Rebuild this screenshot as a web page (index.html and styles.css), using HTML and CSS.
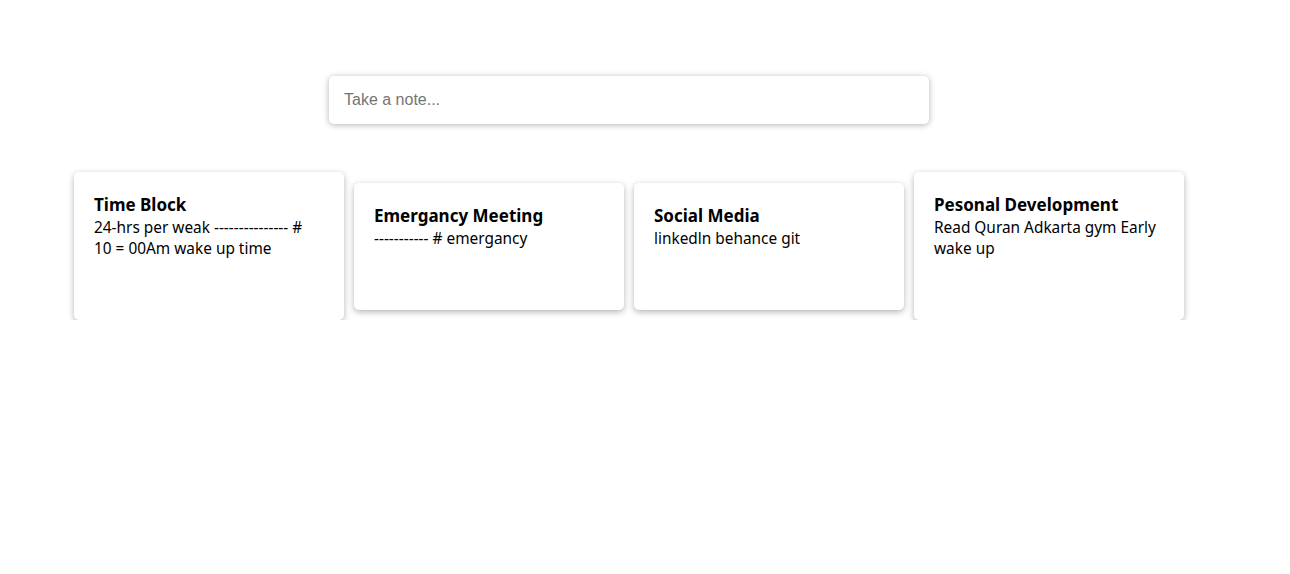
FILE: index.html
```html
<!DOCTYPE html>
<html>
<head>
<meta charset="utf-8">
<link rel="stylesheet" href="styles.css">
</head>
<body>
<div class="app">
  <form class="create">
    <input class="create-input" type="text" placeholder="Take a note...">
  </form>
  <div class="notes">
    <div class="note">
      <h1 class="note-title">Time Block</h1>
      <p class="note-body">24-hrs per weak --------------- # 10 = 00Am wake up time</p>
    </div>
    <div class="note">
      <h1 class="note-title">Emergancy Meeting</h1>
      <p class="note-body">----------- # emergancy</p>
    </div>
    <div class="note">
      <h1 class="note-title">Social Media</h1>
      <p class="note-body">linkedln behance git</p>
    </div>
    <div class="note">
      <h1 class="note-title">Pesonal Development</h1>
      <p class="note-body">Read Quran Adkarta gym Early wake up</p>
    </div>
  </div>
</div>
</body>
</html>
```
FILE: styles.css
```css
html, body {
  margin: 0;
  padding: 0;
  background: #fff;
}
.app {
  width: 1258px;
  padding-top: 76px;
  display: flex;
  flex-direction: column;
  align-items: center;
}
.create {
  margin: 0;
  width: 600px;
}
.create-input {
  box-sizing: border-box;
  width: 600px;
  height: 48px;
  border: none;
  outline: none;
  border-radius: 5px;
  padding: 0 15px;
  font-family: "Liberation Sans", Arial, sans-serif;
  font-size: 16px;
  color: #000;
  background: #fff;
  box-shadow: 0 1px 6px rgba(0, 0, 0, 0.3);
}
.create-input::placeholder {
  color: #757575;
}
.notes {
  margin-top: 48px;
  display: flex;
  align-items: center;
  gap: 10px;
}
.note {
  box-sizing: border-box;
  width: 270px;
  padding: 21px 24px 61px 20px;
  background: #fff;
  border-radius: 5px;
  box-shadow: 0 2px 6px rgba(0, 0, 0, 0.3);
  font-family: "Noto Sans", sans-serif;
}
.note-title {
  margin: 0;
  font-size: 17px;
  line-height: 24px;
  font-weight: 700;
  color: #000;
}
.note-body {
  margin: 0;
  font-size: 15.4px;
  line-height: 21px;
  color: #000;
}
```
